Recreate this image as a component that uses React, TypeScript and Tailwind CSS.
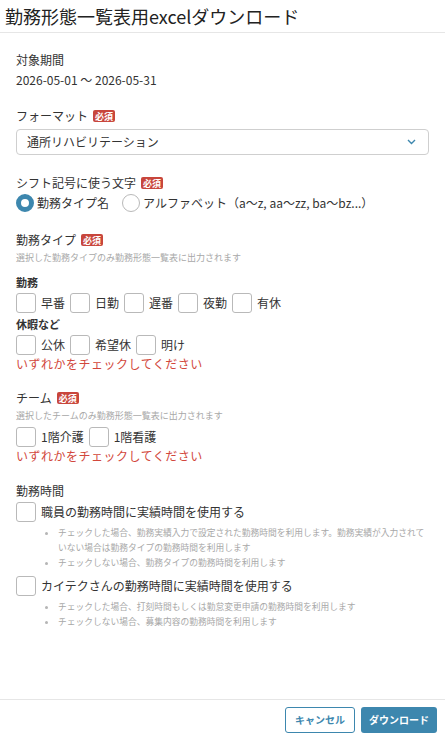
import { useState } from "react";

const FONT = { fontFamily: '"Noto Sans CJK JP", "Noto Sans", sans-serif' };

const WORK_TYPES = ["早番", "日勤", "遅番", "夜勤", "有休"];
const HOLIDAY_TYPES = ["公休", "希望休", "明け"];
const TEAMS = ["1階介護", "1階看護"];

function Required() {
  return (
    <span className="ml-[5px] inline-flex h-[12px] items-center rounded-[2px] bg-[#c8463c] px-[2px] text-[9px] font-bold leading-none text-white">
      必須
    </span>
  );
}

function Box({
  label,
  checked,
  onToggle,
}: {
  label: string;
  checked: boolean;
  onToggle: () => void;
}) {
  return (
    <label className="flex cursor-pointer items-center" onClick={onToggle}>
      <span
        className={`flex h-5 w-5 shrink-0 items-center justify-center rounded-[3px] border ${
          checked ? "border-[#3d87ae] bg-[#3d87ae]" : "border-[#b9b9b9] bg-white"
        }`}
      >
        {checked && (
          <svg width="12" height="12" viewBox="0 0 12 12">
            <path d="M2 6.5 5 9l5-6" fill="none" stroke="#fff" strokeWidth="2" />
          </svg>
        )}
      </span>
      <span className="ml-[5px] mr-[5px] text-[12px] text-[#333]">{label}</span>
    </label>
  );
}

export default function App() {
  const [mode, setMode] = useState<"name" | "alpha">("name");
  const [checked, setChecked] = useState<Record<string, boolean>>({});
  const toggle = (k: string) => setChecked((c) => ({ ...c, [k]: !c[k] }));

  const anyType = [...WORK_TYPES, ...HOLIDAY_TYPES].some((t) => checked["type:" + t]);
  const anyTeam = TEAMS.some((t) => checked["team:" + t]);

  return (
    <div className="flex h-[739px] flex-col bg-white text-[#333]" style={FONT}>
      <header className="flex h-[33px] shrink-0 items-center border-b border-[#e6e6e6] px-[5px]">
        <h1 className="text-[18px] font-normal leading-none text-[#222]">勤務形態一覧表用excelダウンロード</h1>
      </header>

      <main className="flex-1 overflow-hidden px-4 pt-[17px]">
        <section>
          <div className="text-[12px] leading-5">対象期間</div>
          <div className="text-[12px] leading-5">2026-05-01 ～ 2026-05-31</div>
        </section>

        <section className="mt-4">
          <div className="flex items-center text-[12px] leading-5">
            フォーマット
            <Required />
          </div>
          <div className="mt-[3px] flex h-[26px] items-center justify-between rounded-[4px] border border-[#cfcfcf] pl-[10px] pr-[12px]">
            <span className="text-[12px]">通所リハビリテーション</span>
            <svg width="9" height="6" viewBox="0 0 9 6">
              <path d="M1 1l3.5 3.5L8 1" fill="none" stroke="#3d87ae" strokeWidth="1.4" />
            </svg>
          </div>
        </section>

        <section className="mt-[18px]">
          <div className="flex items-center text-[12px] leading-5">
            シフト記号に使う文字
            <Required />
          </div>
          <div className="flex h-5 items-center text-[12px]">
            <label className="flex cursor-pointer items-center" onClick={() => setMode("name")}>
              <span
                className={`h-[18px] w-[18px] rounded-full bg-white ${
                  mode === "name" ? "border-[5px] border-[#3d87ae]" : "border border-[#b9b9b9]"
                }`}
              />
              <span className="ml-[3px]">勤務タイプ名</span>
            </label>
            <label className="ml-[13px] flex cursor-pointer items-center" onClick={() => setMode("alpha")}>
              <span
                className={`h-[18px] w-[18px] rounded-full bg-white ${
                  mode === "alpha" ? "border-[5px] border-[#3d87ae]" : "border border-[#b9b9b9]"
                }`}
              />
              <span className="ml-[3px]">アルファベット（a～z, aa～zz, ba～bz...）</span>
            </label>
          </div>
        </section>

        <section className="mt-[17px]">
          <div className="flex items-center text-[12px] leading-5">
            勤務タイプ
            <Required />
          </div>
          <div className="text-[9px] leading-4 text-[#a8a8a8]">選択した勤務タイプのみ勤務形態一覧表に出力されます</div>
          <div className="mt-2 text-[11px] font-bold leading-4">勤務</div>
          <div className="mt-[3px] flex h-5 items-center">
            {WORK_TYPES.map((t) => (
              <Box key={t} label={t} checked={!!checked["type:" + t]} onToggle={() => toggle("type:" + t)} />
            ))}
          </div>
          <div className="mt-[3px] text-[11px] font-bold leading-4">休暇など</div>
          <div className="mt-[3px] flex h-5 items-center">
            {HOLIDAY_TYPES.map((t) => (
              <Box key={t} label={t} checked={!!checked["type:" + t]} onToggle={() => toggle("type:" + t)} />
            ))}
          </div>
          {!anyType && (
            <div className="text-[12px] leading-[18px] tracking-[0.5px] text-[#d2473c]">いずれかをチェックしてください</div>
          )}
        </section>

        <section className="mt-[15px]">
          <div className="flex items-center text-[12px] leading-5">
            チーム
            <Required />
          </div>
          <div className="text-[9px] leading-4 text-[#a8a8a8]">選択したチームのみ勤務形態一覧表に出力されます</div>
          <div className="mt-[3px] flex h-5 items-center">
            {TEAMS.map((t) => (
              <Box key={t} label={t} checked={!!checked["team:" + t]} onToggle={() => toggle("team:" + t)} />
            ))}
          </div>
          {!anyTeam && (
            <div className="text-[12px] leading-[18px] tracking-[0.5px] text-[#d2473c]">いずれかをチェックしてください</div>
          )}
        </section>

        <section className="mt-4">
          <div className="text-[12px] leading-5">勤務時間</div>
          <div className="mt-px flex h-5 items-center">
            <Box
              label="職員の勤務時間に実績時間を使用する"
              checked={!!checked.staffActual}
              onToggle={() => toggle("staffActual")}
            />
          </div>
          <ul className="mt-[3px] list-disc pl-[42px] text-[8.75px] leading-[15px] text-[#a8a8a8] marker:text-[#b5b5b5]">
            <li>チェックした場合、勤務実績入力で設定された勤務時間を利用します。勤務実績が入力されていない場合は勤務タイプの勤務時間を利用します</li>
            <li>チェックしない場合、勤務タイプの勤務時間を利用します</li>
          </ul>
          <div className="mt-[6px] flex h-5 items-center">
            <Box
              label="カイテクさんの勤務時間に実績時間を使用する"
              checked={!!checked.kaitekuActual}
              onToggle={() => toggle("kaitekuActual")}
            />
          </div>
          <ul className="mt-[3px] list-disc pl-[42px] text-[8.75px] leading-[15px] text-[#a8a8a8] marker:text-[#b5b5b5]">
            <li>チェックした場合、打刻時間もしくは勤怠変更申請の勤務時間を利用します</li>
            <li>チェックしない場合、募集内容の勤務時間を利用します</li>
          </ul>
        </section>
      </main>

      <footer className="flex h-10 shrink-0 items-center justify-end gap-[6px] border-t border-[#e6e6e6] pr-2">
        <button className="h-[26px] rounded-[3px] border border-[#3d87ae] bg-white px-[9px] text-[10px] font-bold text-[#3d87ae]">
          キャンセル
        </button>
        <button className="h-[26px] rounded-[3px] bg-[#3d87ae] px-[8px] text-[10px] font-bold text-white">
          ダウンロード
        </button>
      </footer>
    </div>
  );
}
